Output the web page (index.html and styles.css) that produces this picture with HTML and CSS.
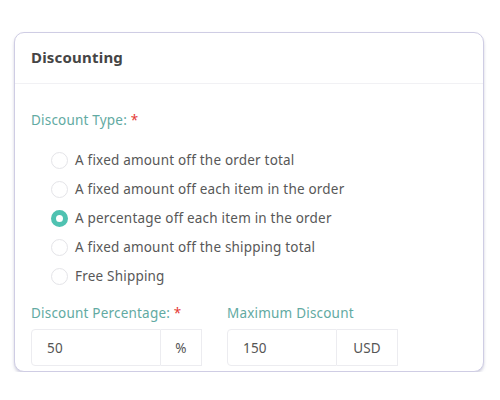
FILE: index.html
```html
<!DOCTYPE html>
<html>
<head>
<meta charset="utf-8">
<link rel="stylesheet" href="styles.css">
</head>
<body>
<div class="card">
  <div class="card-header">Discounting</div>
  <div class="card-body">
    <div class="field-label">Discount Type: <span class="req">*</span></div>
    <div class="radios">
      <label class="radio"><span class="dot"></span>A fixed amount off the order total</label>
      <label class="radio"><span class="dot"></span>A fixed amount off each item in the order</label>
      <label class="radio"><span class="dot checked"></span>A percentage off each item in the order</label>
      <label class="radio"><span class="dot"></span>A fixed amount off the shipping total</label>
      <label class="radio"><span class="dot"></span>Free Shipping</label>
    </div>
    <div class="row">
      <div class="group">
        <div class="field-label">Discount Percentage: <span class="req">*</span></div>
        <div class="input-group">
          <div class="input pct">50</div>
          <div class="addon pct-addon">%</div>
        </div>
      </div>
      <div class="group">
        <div class="field-label">Maximum Discount</div>
        <div class="input-group">
          <div class="input max">150</div>
          <div class="addon usd-addon">USD</div>
        </div>
      </div>
    </div>
  </div>
</div>
</body>
</html>
```
FILE: styles.css
```css
html, body { margin: 0; padding: 0; background: #fff; }
body {
  font-family: "Noto Sans", "DejaVu Sans", sans-serif;
  padding: 32px 16px 0 14px;
}
.card {
  width: 470px;
  height: 340px;
  border: 1px solid #cfcde4;
  border-radius: 10px;
  box-shadow: 0 2px 3px rgba(120, 120, 160, 0.35);
  box-sizing: border-box;
  background: #fff;
}
.card-header {
  height: 51px;
  border-bottom: 1px solid #f1f1f4;
  padding-left: 16px;
  padding-bottom: 3px;
  display: flex;
  align-items: center;
  font-weight: 700;
  font-size: 15px;
  letter-spacing: 0.2px;
  color: #454545;
  box-sizing: border-box;
}
.card-body {
  padding: 26px 16px 0 16px;
  letter-spacing: 0.2px;
}
.field-label {
  color: #62aaa2;
  font-size: 13.5px;
  line-height: 20px;
}
.req { color: #e53935; }
.radios {
  display: flex;
  flex-direction: column;
  padding: 20px 0 0 20px;
  gap: 9px;
}
.radio {
  display: flex;
  align-items: center;
  height: 20px;
  color: #585858;
  font-size: 13.5px;
  gap: 7px;
}
.dot {
  width: 17px;
  height: 17px;
  border-radius: 50%;
  border: 1px solid #e4e4e8;
  box-sizing: border-box;
}
.dot.checked {
  border: 5.5px solid #4fc2b1;
  background: #fff;
}
.row {
  display: flex;
  gap: 25px;
  margin-top: 17px;
}
.group { display: flex; flex-direction: column; gap: 6px; }
.input-group { display: flex; height: 37px; }
.input {
  border: 1px solid #ececf0;
  border-radius: 4px 0 0 4px;
  display: flex;
  align-items: center;
  padding-left: 15px;
  box-sizing: border-box;
  color: #555;
  font-size: 13.5px;
}
.addon {
  border: 1px solid #ececf0;
  border-left: none;
  display: flex;
  align-items: center;
  justify-content: center;
  box-sizing: border-box;
  color: #555;
  font-size: 13.5px;
}
.pct { width: 130px; }
.pct-addon { width: 41px; }
.max { width: 110px; }
.usd-addon { width: 61px; }
```
